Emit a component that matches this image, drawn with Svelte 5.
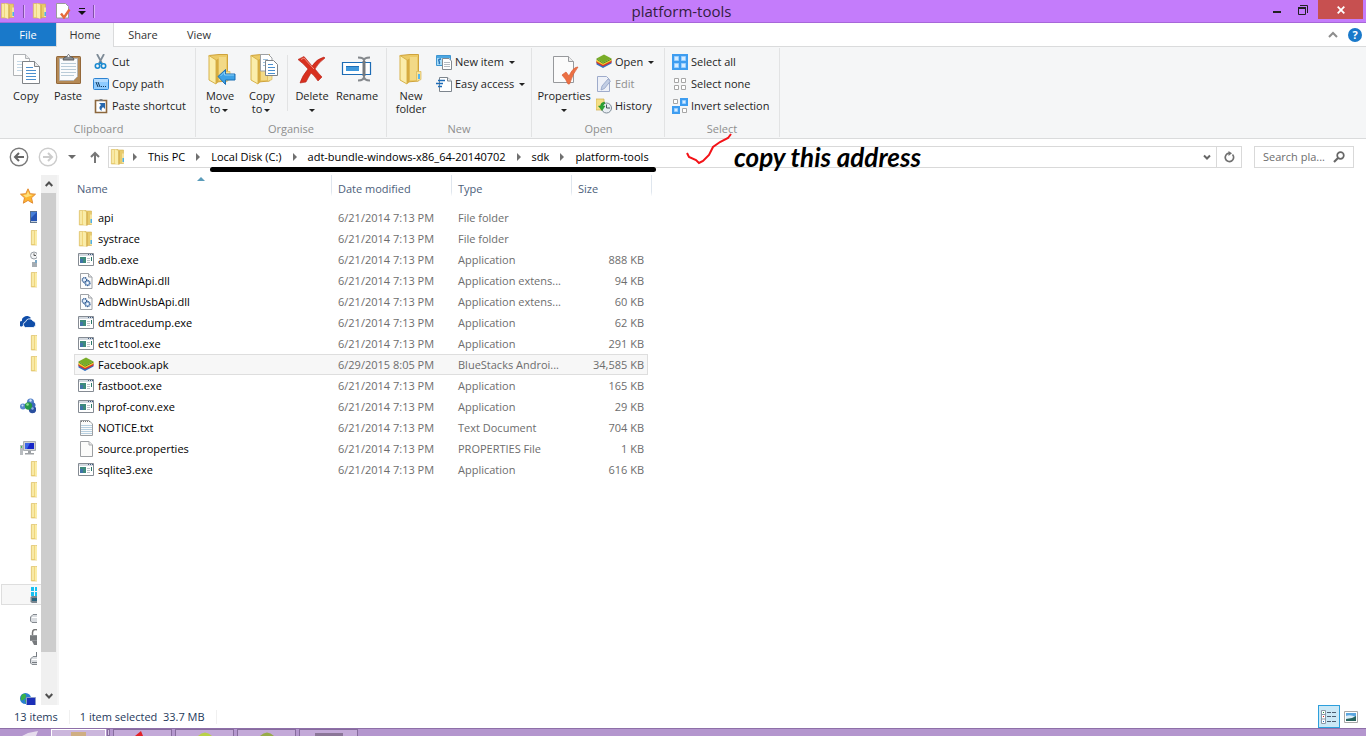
<script>
  const files = [
    { name: 'api', date: '6/21/2014 7:13 PM', type: 'File folder', size: '', icon: 'folder' },
    { name: 'systrace', date: '6/21/2014 7:13 PM', type: 'File folder', size: '', icon: 'folder' },
    { name: 'adb.exe', date: '6/21/2014 7:13 PM', type: 'Application', size: '888 KB', icon: 'exe' },
    { name: 'AdbWinApi.dll', date: '6/21/2014 7:13 PM', type: 'Application extens...', size: '94 KB', icon: 'dll' },
    { name: 'AdbWinUsbApi.dll', date: '6/21/2014 7:13 PM', type: 'Application extens...', size: '60 KB', icon: 'dll' },
    { name: 'dmtracedump.exe', date: '6/21/2014 7:13 PM', type: 'Application', size: '62 KB', icon: 'exe' },
    { name: 'etc1tool.exe', date: '6/21/2014 7:13 PM', type: 'Application', size: '291 KB', icon: 'exe' },
    { name: 'Facebook.apk', date: '6/29/2015 8:05 PM', type: 'BlueStacks Androi...', size: '34,585 KB', icon: 'stack' },
    { name: 'fastboot.exe', date: '6/21/2014 7:13 PM', type: 'Application', size: '165 KB', icon: 'exe' },
    { name: 'hprof-conv.exe', date: '6/21/2014 7:13 PM', type: 'Application', size: '29 KB', icon: 'exe' },
    { name: 'NOTICE.txt', date: '6/21/2014 7:13 PM', type: 'Text Document', size: '704 KB', icon: 'text' },
    { name: 'source.properties', date: '6/21/2014 7:13 PM', type: 'PROPERTIES File', size: '1 KB', icon: 'page' },
    { name: 'sqlite3.exe', date: '6/21/2014 7:13 PM', type: 'Application', size: '616 KB', icon: 'exe' }
  ];

  const crumbs = ['This PC', 'Local Disk (C:)', 'adt-bundle-windows-x86_64-20140702', 'sdk', 'platform-tools'];

  // null leaves a blank row between the sections of the tree
  const tree = [
    'star', 'desktop', 'folder', 'recent', 'folder', null,
    'cloud', 'folder', 'folder', null,
    'homegroup', null,
    'pc', 'folder', 'folder', 'folder', 'folder', 'folder', 'folder',
    'osdrive', 'drive', 'locked', 'removable', null,
    'network'
  ];
  const roots = ['star', 'cloud', 'homegroup', 'pc', 'network'];

  let selected = $state('Facebook.apk');
  let query = $state('');
</script>

{#snippet icon(name)}
  <svg class="ico" viewBox="0 0 16 16" aria-hidden="true">
    {#if name === 'folder'}
      <path d="M7 1h6.500v13.500H7z" fill="#e8cb6c" stroke="#d3b253" stroke-width=".6" />
      <path d="M1.300.5H8V15H1.300z" fill="#f0d67c" stroke="#d9ba5c" stroke-width=".6" />
      <path d="M2 1h2v13H2z" fill="#f8e9a6" />
      <path d="M5 .5 8.500 2v14L5 14.500z" fill="#faeda9" />
      <path d="M8.500 2h1v13.500l-1 .5z" fill="#cda340" />
      <path d="M12 4.500h2V14h-2z" fill="#f5e3a0" />
      <path d="M12.500 9H14v4h-1.500z" fill="#4fb0e4" />
    {:else if name === 'exe'}
      <path d="M.5 1.500h15v12H.5z" fill="#fff" stroke="#858b93" />
      <path d="M1 2h14v2H1z" fill="#d3d9e0" />
      <path d="M10 2h1v1h-1zM12 2h1v1h-1zM14 2h1v1h-1z" fill="#3f5a80" />
      <path d="M2 5h6v6H2z" fill="#3d8a7c" />
      <path d="M2 7h3v4H2z" fill="#4173a8" />
      <path d="M9 6h3v1H9zM9 8h3v1H9zM9 10h3v1H9z" fill="#bcc2c8" />
      <path d="M13 5h1v4h-1z" fill="#2b7869" />
    {:else if name === 'dll'}
      <path d="M2.500.5h8L14 4v11.500H2.500z" fill="#fdfdfd" stroke="#9fa3a8" />
      <path d="M10.500.5V4H14" fill="#e8e8e8" stroke="#9fa3a8" />
      <circle cx="6.500" cy="7" r="2.300" fill="#e4eefb" stroke="#2f5a91" stroke-dasharray="1.200 .5" stroke-width="1.300" />
      <circle cx="9.500" cy="10" r="2.500" fill="#b9d0ea" stroke="#2f5a91" stroke-dasharray="1.200 .5" stroke-width="1.300" />
      <circle cx="9.500" cy="10" r=".9" fill="#fff" />
    {:else if name === 'stack'}
      <path d="M.5 7 7 10.500 15.500 6.500V9.500L7 14 .5 10.500z" fill="#3171c4" />
      <path d="M.5 6.500 7 10 15.500 6v2.500L7 12.500.5 9z" fill="#d8362b" />
      <path d="M.5 5.500 7 9 15.500 5v1.700L7 11 .5 7.500z" fill="#f6cf30" />
      <path d="M.5 4.500 8 .5 15.500 4.500 7 8.700z" fill="#79ad28" />
      <path d="M.5 4.500 7 8.700 15.500 4.500v.9L7 9.800.5 5.500z" fill="#4b8616" />
    {:else if name === 'text' || name === 'page'}
      <path d="M2.500.5h8.500L14.500 4v11.500h-12z" fill="#fbfbfa" stroke="#9c9fa2" />
      {#if name === 'text'}
        <path d="M3 5.500h11M3 7.500h11M3 9.500h11M3 11.500h11M3 13.500h11" stroke="#b7cfe0" />
        <path d="M3 1.500h9" stroke="#777" stroke-dasharray="1 1" />
      {:else}
        <path d="M11 .5V4h3.500" fill="#e6e6e6" stroke="#a9abad" />
      {/if}
    {:else if name === 'star'}
      <path d="m8 .8 2.200 4.900 5.300.5-4 3.600 1.200 5.400L8 12.400l-4.700 2.800 1.200-5.400-4-3.600 5.300-.5z" fill="#fdb52e" stroke="#e28d35" />
      <path d="m8 3 1.400 3.600 3.600.4-7 2.500L3 7l3.600-.4z" fill="#ffe07d" />
    {:else if name === 'desktop'}
      <path d="M0 2h16v12H0z" fill="#5a718f" />
      <path d="M1 3h14v9H1z" fill="#2453b5" />
      <path d="m1 3 6 0-6 6z" fill="#477fd8" />
      <path d="M1 12h14v1H1z" fill="#c2cedb" />
    {:else if name === 'recent'}
      <circle cx="4" cy="4.500" r="3.500" fill="#f3f4f5" stroke="#9aa0a6" />
      <path d="M4 2.500v2h2" fill="none" stroke="#555" />
      <path d="M2 11h12v5H2z" fill="#a6adb3" />
      <path d="M5 9h4v3H5z" fill="#79a8c8" />
    {:else if name === 'cloud'}
      <path d="M2 12.500a2.800 2.800 0 0 1 0-5.600 3.500 3.500 0 0 1 2-3.900A5 5 0 0 1 11 4L7 7z" fill="#0f4da8" />
      <path d="M5.500 13.500a3 3 0 0 1 .2-5.800 3.800 3.800 0 0 1 7-1 3.500 3.500 0 0 1 .5 6.800z" fill="#0f4da8" stroke="#fff" stroke-width=".8" />
    {:else if name === 'homegroup'}
      <circle cx="10.500" cy="4" r="3.500" fill="#507fc8" />
      <circle cx="3" cy="8.500" r="3" fill="#5987cf" />
      <circle cx="12.500" cy="11.500" r="3.700" fill="#2a4f9f" />
      <circle cx="13" cy="7" r="2.500" fill="#3b68b8" />
      <circle cx="8.500" cy="8" r="3.700" fill="#249746" />
      <circle cx="7.500" cy="6.500" r="1.300" fill="#93df92" />
      <circle cx="10.500" cy="2.500" r="1.200" fill="#cfe2fa" />
      <circle cx="12.500" cy="10.500" r="1.200" fill="#8fb2ea" />
      <circle cx="2.500" cy="7.500" r="1" fill="#d4e4fa" />
    {:else if name === 'pc'}
      <path d="M0 5h3v10H0z" fill="#b8bcc0" />
      <path d="M1 6h1v2H1z" fill="#44bd50" />
      <path d="M3.500 1.500h12v9h-12z" fill="#cfd2d5" stroke="#aaaeb2" />
      <path d="M5 3h9v6H5z" fill="#1726c8" />
      <path d="M5 3h5L7 9H5z" fill="#3c65e6" />
      <path d="M8 11h3v2H8zM5 13h9v1.500H5z" fill="#9da1a5" />
    {:else if name === 'osdrive'}
      <path d="M1 0h3v4H1zM5 0h4v4H5zM1 5h3v4H1zM5 5h4v4H5z" fill="#17c1f2" />
      <path d="M.500 10 2 9h14v7H2L.5 15z" fill="#7b8790" />
      <path d="M2 11h14v3H2z" fill="#26647f" />
    {:else if name === 'drive' || name === 'removable'}
      <path d="M.5 9 3 6.500h13v8H2L.5 13z" fill="#d9dce0" stroke="#84898f" />
      <path d="M2 9.500h13" stroke="#fff" />
      {#if name === 'removable'}
        <path d="M6.500 2v5M2 12.500h13" stroke="#777c82" />
      {/if}
    {:else if name === 'locked'}
      <path d="M2.500 6V3.500q0-3 3-3T9 3.500V6" fill="none" stroke="#777" stroke-width="1.500" />
      <path d="M0 6h12v6H0z" fill="#929598" />
      <path d="M0 8h12M0 10h12" stroke="#5e6265" />
      <path d="M2 12h8v4H4z" fill="#777a7d" />
    {:else if name === 'network'}
      <circle cx="5.500" cy="6.500" r="5.500" fill="#2b7fd0" />
      <path d="M2 2.500q4-2 4 1T3 8 1 5zM5 8l4-2v5l-3 1z" fill="#37b248" />
      <path d="M6.500 5.500h9v8h-9z" fill="#1b2fb8" stroke="#8c9cc8" />
      <path d="M9 14h4v2H9z" fill="#7b86a5" />
    {:else if name === 'cut'}
      <path d="m4 0 5 9.500M11 0 6 9.500" fill="none" stroke="#7e8b97" stroke-width="1.800" />
      <circle cx="4.500" cy="12" r="2.200" fill="none" stroke="#1b8ad0" stroke-width="1.600" />
      <circle cx="10.500" cy="12" r="2.200" fill="none" stroke="#1b8ad0" stroke-width="1.600" />
      <path d="m6 10.500 1.500-2L9 10.500" fill="none" stroke="#1b8ad0" stroke-width="1.400" />
    {:else if name === 'path'}
      <rect x=".5" y="2.500" width="15" height="11" rx="1" fill="#8ecbff" stroke="#2d83d2" />
      <path d="M1 3h14v3H1z" fill="#b4dcff" />
      <path d="m3 6 2 5m0-5 2 5" stroke="#143a5e" />
      <path d="M8 10h1v1H8zM10 10h1v1h-1zM12 10h1v1h-1z" fill="#143a5e" />
    {:else if name === 'shortcut'}
      <path d="M2.500 2.500h11v12h-11z" fill="#fff" stroke="#8c673d" stroke-width="1.600" />
      <path d="M5 3q3-4 6 0z" fill="#777" />
      <path d="M6 5h6v6l-2-2q-2 1.500-1.500 4Q4.500 10 8 7z" fill="#2768ae" />
    {:else if name === 'newitem'}
      <path d="M.5 1.500h14v10H.5z" fill="#a9ddf8" stroke="#3f95d1" />
      <path d="M1 2h13v2H1z" fill="#4ca7e2" />
      <path d="M5 5q-3 0-2 2t0 3" fill="none" stroke="#2471b8" stroke-width="1.500" />
      <path d="M6.500 4.500H13L15.500 7v8.500h-9z" fill="#fff" stroke="#858a8f" />
      <path d="M8 8.500h6M8 10.500h6M8 12.500h6" stroke="#b6bcc2" />
    {:else if name === 'easy'}
      <path d="M3.500 1.500h8l4 3.500v10.500h-12z" fill="#fff" stroke="#7d858d" />
      <path d="M11.500 1.500V5h4" fill="#edf0f2" stroke="#7d858d" />
      <path d="M2 4.500h7M0 7.500h7M2 10.500h4" stroke="#1d6cb8" stroke-width="1.300" />
    {:else if name === 'edit'}
      <path d="M1.500.5h9l3 3v12h-12z" fill="#eef1f8" stroke="#9eabcb" />
      <path d="m5 14 1-4 6-7 2.500 2-6 7.500z" fill="#c2cee4" stroke="#8fa0c4" stroke-width=".8" />
    {:else if name === 'history'}
      <path d="M0 1h8v11H0z" fill="#f4df85" stroke="#d0ae4c" stroke-width=".7" />
      <circle cx="10.500" cy="10" r="5" fill="#e9eef3" stroke="#7d8b97" />
      <path d="M10.500 6.500V10H14" fill="none" stroke="#49545e" />
      <path d="M8.500 4q-4 .5-4 4H2.500L6 12.500 9 8H7q0-2 1.500-2z" fill="#2ba534" stroke="#178022" stroke-width=".5" />
    {:else if name === 'selall'}
      <path d="M0 0h16v16H0z" fill="#3e9df0" />
      <path d="M2.500 2.500h4v4h-4zM9.500 2.500h4v4h-4zM2.500 9.500h4v4h-4zM9.500 9.500h4v4h-4z" fill="#d7edff" stroke="#9bcfff" />
    {:else if name === 'selnone'}
      <path d="M2.500 2.500h4v4h-4zM9.500 2.500h4v4h-4zM2.500 9.500h4v4h-4zM9.500 9.500h4v4h-4z" fill="#fff" stroke="#a6a6a6" />
    {:else if name === 'invert'}
      <path d="M8 0h8v8H8zM0 8h8v8H0z" fill="#3e9df0" />
      <path d="M1.500 1.500h4v4h-4zM10.500 10.500h4v4h-4z" fill="#fff" stroke="#a6a6a6" />
      <path d="M10.500 2.500h3v3h-3zM2.500 10.500h3v3h-3z" fill="#d7edff" stroke="#9bcfff" />
    {:else if name === 'check'}
      <path d="M1.500.5h9l3 3v11.500h-12z" fill="#fff" stroke="#9b9b9b" />
      <path d="m6 10.500 3 4 5.500-8" fill="none" stroke="#e76b3c" stroke-width="2.400" />
    {/if}
  </svg>
{/snippet}

{#snippet bigicon(name)}
  <svg class="bigico" viewBox="0 0 32 32" aria-hidden="true">
    {#if name === 'copy'}
      <path d="M3.500 1.500h12l4 4v17h-16z" fill="#fdfdfd" stroke="#b0b3b6" />
      <path d="M15.500 1.500v4h4" fill="#e8e8e8" stroke="#b0b3b6" />
      <path d="M7 8.500h7M7 11.500h6M7 14.500h6M7 17.500h6" stroke="#c4d8e7" />
      <path d="M12.500 8.500h12l5 5v17h-17z" fill="#fff" stroke="#7f8387" />
      <path d="M24.500 8.500v5h5" fill="#e8e8e8" stroke="#7f8387" />
      <path d="M16 14.500h7M16 17.500h10M16 20.500h10M16 23.500h10M16 26.500h10" stroke="#4b8fce" />
    {:else if name === 'paste'}
      <rect x="4" y="3" width="25" height="28" rx="1.500" fill="#94683a" />
      <path d="M5 4h23v26H5z" fill="#b58a56" />
      <path d="M7.500 5.500h18v18l-4 4h-14z" fill="#fafbfc" stroke="#b5b5b5" />
      <path d="M9 10.500h15M9 13.500h15M9 16.500h15M9 19.500h15M9 22.500h13" stroke="#b9cbd8" />
      <path d="M11 7q0-3 4-3.500 1.500-4 3 0 4 .5 4 3.500z" fill="#8a8e92" stroke="#5d6165" />
      <circle cx="16.500" cy="3" r="1" fill="#fff" />
    {:else if name === 'move' || name === 'copyto' || name === 'newfolder'}
      <path d="M5 2.500 15 1.500h8.500V28L12 29z" fill="#ecca66" stroke="#cfa33c" />
      <path d="M15 4h7v23h-7z" fill="#f2d987" />
      <path d="M5 2.500 12 7v24l-7-4z" fill="#fbedaa" stroke="#d8b34b" />
      <path d="M12 7 14.500 5.500V29L12 31z" fill="#d6ab40" />
      <path d="M21.500 18.500H26v8l-4.500 2z" fill="#f6e29a" stroke="#d8b454" stroke-width=".7" />
      {#if name === 'newfolder'}
        <path d="M23 21h2v5h-2z" fill="#57b5ec" />
      {:else if name === 'move'}
        <path d="M14 23.500 21.500 16.500V21H31v6h-9.500v4.500z" fill="#3ea2e6" stroke="#1d6fb3" />
        <path d="m16.500 23 4-4v3h9.500" fill="none" stroke="#8ad0f7" />
      {:else}
        <path d="M14.500 1.500h8L26 5v13H14.500z" fill="#fff" stroke="#9da0a4" />
        <path d="M17 6.500h5M17 9.500h5M17 12.500h5" stroke="#9fc0dc" />
        <path d="M19.500 7.500h8l4 4v11h-12z" fill="#fff" stroke="#7f8387" />
        <path d="M22 11.500h5M22 14.500h7M22 17.500h7M22 20.500h7" stroke="#4b8fce" />
      {/if}
    {:else if name === 'delete'}
      <path d="M2 6.500 8 3.500Q12 8 16 13 21 5.500 28 4l1 1q-7 5-10 11 4 5 7 8l-4 4q-4-6-7-8-3 5-5 9l-6 1q2-7 8-14Q8 11 2 6.500z" fill="#d8301f" stroke="#b5241a" stroke-width=".6" />
      <path d="M5 6.500 8 5q6 7 10 11" fill="none" stroke="#f08b7b" />
    {:else if name === 'rename'}
      <path d="M1.500 9.500h28v12h-28z" fill="#fff" stroke="#1d6cb5" stroke-width="1.200" />
      <path d="M5 13h13v5H5z" fill="#3f98dc" />
      <path d="M5 13h13v1H5z" fill="#1f70b8" />
      <path d="M17 4.500q6 0 6 3v16q0 4-6 4m12-23q-6 0-6 3v16q0 4 6 4" fill="none" stroke="#85898d" stroke-width="2" />
      <path d="M23 8v15" stroke="#75797d" stroke-width="3" />
    {:else if name === 'props'}
      <path d="M5.500 3.500h15l5 5v21h-20z" fill="#fbfbfb" stroke="#97999c" />
      <path d="M20.500 3.500v5h5" fill="#ececec" stroke="#97999c" />
      <path d="m14 22 4-3 3 4q4-9 9-9-5 6-8.500 17H20q-2-5-6-9z" fill="#ec7043" stroke="#d95c33" stroke-width=".7" />
    {/if}
  </svg>
{/snippet}

{#snippet big(name, lines, wide = '', drop = false)}
  <button class="big {wide}">
    {@render bigicon(name)}
    <span>
      {#each lines as line, i}
        {line}{#if i < lines.length - 1}<br />{/if}
      {/each}{#if drop}{#if lines.length === 1}<br />{/if}<i class="caret"></i>{/if}
    </span>
  </button>
{/snippet}

{#snippet small(name, label, drop = false, disabled = false)}
  <button class="small" {disabled}>
    {@render icon(name)}
    <span>{label}</span>
    {#if drop}<i class="caret"></i>{/if}
  </button>
{/snippet}

<div class="window">
  <header class="titlebar">
    <div class="quick">
      {@render icon('folder')}
      <i class="bar"></i>
      <button aria-label="New folder">{@render icon('folder')}</button>
      <button aria-label="Properties">{@render icon('check')}</button>
      <button class="more" aria-label="Customise">
        <svg width="8" height="7" viewBox="0 0 8 7"><path d="M1 0h6v1H1zM0 3h8L4 7z" fill="#111" /></svg>
      </button>
      <i class="bar"></i>
    </div>
    <h1>platform-tools</h1>
    <div class="controls">
      <button aria-label="Minimise"><svg width="10" height="10" viewBox="0 0 10 10"><path d="M1 6h8v2H1z" fill="#222" /></svg></button>
      <button aria-label="Restore">
        <svg width="10" height="10" viewBox="0 0 10 10"><path d="M2 .5h7.500V8M.5 3h7v6.500h-7z" fill="none" stroke="#222" /><path d="M0 2h8v2H0z" fill="#222" /></svg>
      </button>
      <button class="close" aria-label="Close">
        <svg width="8" height="8" viewBox="0 0 8 8"><path d="m.7.7 6.600 6.600m0-6.600L.7 7.300" stroke="#fff" stroke-width="1.800" /></svg>
      </button>
    </div>
  </header>

  <nav class="tabs">
    <button class="file">File</button>
    <button class="active">Home</button>
    <button>Share</button>
    <button class="view">View</button>
    <div class="help">
      <button aria-label="Collapse ribbon">
        <svg width="10" height="8" viewBox="0 0 10 8"><path d="m1 6 4-4 4 4" fill="none" stroke="#8d8d8d" stroke-width="2" /></svg>
      </button>
      <button class="question" aria-label="Help">?</button>
    </div>
  </nav>

  <div class="ribbon">
    <section class="group clipboard">
      <div class="tools">
        {@render big('copy', ['Copy'])}
        {@render big('paste', ['Paste'])}
        <div class="stack">
          {@render small('cut', 'Cut')}
          {@render small('path', 'Copy path')}
          {@render small('shortcut', 'Paste shortcut')}
        </div>
      </div>
      <h2>Clipboard</h2>
    </section>
    <section class="group organise">
      <div class="tools">
        {@render big('move', ['Move', 'to'], '', true)}
        {@render big('copyto', ['Copy', 'to'], '', true)}
        <i class="divider"></i>
        {@render big('delete', ['Delete'], '', true)}
        {@render big('rename', ['Rename'], 'wide')}
      </div>
      <h2>Organise</h2>
    </section>
    <section class="group new">
      <div class="tools">
        {@render big('newfolder', ['New', 'folder'])}
        <div class="stack">
          {@render small('newitem', 'New item', true)}
          {@render small('easy', 'Easy access', true)}
        </div>
      </div>
      <h2>New</h2>
    </section>
    <section class="group open">
      <div class="tools">
        {@render big('props', ['Properties'], 'wider', true)}
        <div class="stack">
          {@render small('stack', 'Open', true)}
          {@render small('edit', 'Edit', false, true)}
          {@render small('history', 'History')}
        </div>
      </div>
      <h2>Open</h2>
    </section>
    <section class="group select">
      <div class="tools">
        <div class="stack">
          {@render small('selall', 'Select all')}
          {@render small('selnone', 'Select none')}
          {@render small('invert', 'Invert selection')}
        </div>
      </div>
      <h2>Select</h2>
    </section>
  </div>

  <div class="addressbar">
    <button aria-label="Back">
      <svg width="20" height="20" viewBox="0 0 20 20"><circle cx="10" cy="10" r="8.700" fill="none" stroke="#7a7a7a" stroke-width="1.400" /><path d="M15 10H6m4-4-4 4 4 4" fill="none" stroke="#666" stroke-width="2" /></svg>
    </button>
    <button aria-label="Forward" disabled>
      <svg width="20" height="20" viewBox="0 0 20 20"><circle cx="10" cy="10" r="8.700" fill="none" stroke="#ccc" stroke-width="1.400" /><path d="M5 10h9m-4-4 4 4-4 4" fill="none" stroke="#ccc" stroke-width="2" /></svg>
    </button>
    <button class="recent" aria-label="Recent locations">
      <svg width="8" height="5" viewBox="0 0 8 5"><path d="M0 0h8L4 4z" fill="#6b6b6b" /></svg>
    </button>
    <button class="up" aria-label="Up">
      <svg width="10" height="12" viewBox="0 0 10 12"><path d="M5 12V2M1 6l4-4 4 4" fill="none" stroke="#777" stroke-width="2" /></svg>
    </button>
    <div class="address">
      <div class="crumbs">
        {@render icon('folder')}
        {#each crumbs as crumb}
          <svg width="4" height="8" viewBox="0 0 4 8"><path d="M0 0v8l4-4z" fill="#707070" /></svg>
          <a href="#{crumb}">{crumb}</a>
        {/each}
      </div>
      <button class="history" aria-label="Previous locations">
        <svg width="8" height="7" viewBox="0 0 8 7"><path d="m1 1.500 3 3 3-3" fill="none" stroke="#666" stroke-width="2" /></svg>
      </button>
      <button class="refresh" aria-label="Refresh">
        <svg width="12" height="12" viewBox="0 0 12 12"><path d="M9.500 3.500A4.200 4.200 0 1 1 6 2.200" fill="none" stroke="#707070" stroke-width="1.700" /><path d="M5.500 0 9 2.300 5.500 5z" fill="#707070" /></svg>
      </button>
      <div class="underline"></div>
      <div class="note">
        <svg width="48" height="36" viewBox="0 0 48 36"><path d="m1 20 2 4 7 3 3 3 4-2 6-6 4-8 7-5 8-4 3-4" fill="none" stroke="#f31217" stroke-width="2" /></svg>
        <span>copy this address</span>
      </div>
    </div>
    <label class="search">
      <input type="text" placeholder="Search pla..." aria-label="Search" bind:value={query} />
      <svg width="12" height="12" viewBox="0 0 12 12"><circle cx="7.500" cy="4.500" r="3.300" fill="none" stroke="#666" stroke-width="1.700" /><path d="M5 7 1 11" stroke="#666" stroke-width="2.200" /></svg>
    </label>
  </div>

  <div class="body">
    <aside>
      <ul>
        {#each tree as item}
          <li class:root={roots.includes(item)} class:current={item === 'osdrive'}>
            {#if item}<span>{@render icon(item)}</span>{/if}
          </li>
        {/each}
      </ul>
      <div class="scrollbar">
        <button aria-label="Scroll up"><svg width="8" height="8" viewBox="0 0 8 8"><path d="m.7 6 3.300-3.500L7.300 6" fill="none" stroke="#505050" stroke-width="2" /></svg></button>
        <div class="track"><div class="thumb"></div></div>
        <button aria-label="Scroll down"><svg width="8" height="8" viewBox="0 0 8 8"><path d="m.7 2 3.300 3.500L7.300 2" fill="none" stroke="#505050" stroke-width="2" /></svg></button>
      </div>
    </aside>

    <main>
      <table>
        <colgroup>
          <col class="c-name" /><col class="c-date" /><col class="c-date" /><col class="c-size" /><col class="c-end" /><col class="c-end" />
        </colgroup>
        <thead>
          <tr>
            <th>Name<svg class="sort" width="8" height="4" viewBox="0 0 8 4"><path d="m0 4 4-4 4 4z" fill="#5b9cba" /></svg></th>
            <th>Date modified</th>
            <th>Type</th>
            <th colspan="3">Size</th>
          </tr>
        </thead>
        <tbody>
          {#each files as file}
            <tr class:selected={selected === file.name} onclick={() => (selected = file.name)}>
              <td class="name"><div>{@render icon(file.icon)}{file.name}</div></td>
              <td>{file.date}</td>
              <td>{file.type}</td>
              <td class="size">{file.size}</td>
              <td class="gap"></td>
            </tr>
          {/each}
        </tbody>
      </table>
    </main>
  </div>

  <footer class="status">
    <span>13 items</span>
    <span>1 item selected&nbsp; 33.7 MB</span>
    <div class="views">
      <button class="on" aria-label="Details">
        <svg width="16" height="14" viewBox="0 0 16 14"><path d="M.5.5h4v13h-4zM.5 4.500h4M.5 9h4" fill="#fff" stroke="#8c98a5" /><path d="M2 2h1v1H2z" fill="#2b8f3a" /><path d="M2 6h1v1H2z" fill="#e01919" /><path d="M2 11h1v1H2z" fill="#246dc0" /><path d="M6 2.500h4M11 2.500h4M6 6.500h4M11 6.500h4M6 11.500h4M11 11.500h4" stroke="#4c5d70" /></svg>
      </button>
      <button aria-label="Large icons">
        <svg width="14" height="12" viewBox="0 0 14 12"><path d="M.5.5h13v11H.5z" fill="#fff" stroke="#a7a7a7" /><path d="M2 2h10v8H2z" fill="#5ba6df" /><path d="M2 5q4-2 10 1v2H2z" fill="#dceefa" /><path d="m2 8 6-1 4-2v5H2z" fill="#28645e" /></svg>
      </button>
    </div>
  </footer>

  <div class="taskbar">
    <svg class="start" width="20" height="7" viewBox="0 0 20 7"><path d="m3 7 6-3 10-2-2 5z" fill="#e6dced" /></svg>
    <button class="on" aria-label="File Explorer"><svg width="16" height="6" viewBox="0 0 16 6"><path d="M0 1h15v5H0z" fill="#cfae83" /></svg></button>
    <i></i>
    <button aria-label="Reader"><svg width="16" height="7" viewBox="0 0 16 7"><path d="m0 6 6-5 2 5z" fill="#e32127" /></svg></button>
    <button aria-label="Android Studio"><svg width="16" height="6" viewBox="0 0 16 6"><path d="M0 6q8-9 16 0z" fill="#b8d148" /></svg></button>
    <button aria-label="Android Tools"><svg width="16" height="6" viewBox="0 0 16 6"><path d="M0 6q8-9 16 0z" fill="#97ab48" /></svg></button>
    <button aria-label="Console"><svg width="28" height="5" viewBox="0 0 28 5"><path d="M0 2h28v3H0z" fill="#8b7698" /></svg></button>
  </div>
</div>

<style>
  :global(body) {
    margin: 0;
    background: #fff;
  }

  .window {
    display: flex;
    flex-direction: column;
    height: 100vh;
    overflow: hidden;
    font: 11px/14px "Open Sans", "Noto Sans", sans-serif;
    color: #1e1e1e;
  }

  button {
    display: flex;
    align-items: center;
    justify-content: center;
    box-sizing: border-box;
    margin: 0;
    padding: 0;
    border: 0;
    background: none;
    color: inherit;
    font: inherit;
  }

  svg {
    display: block;
    flex: none;
  }

  .ico {
    width: 16px;
    height: 16px;
  }

  .caret {
    display: inline-block;
    margin: 0 2px;
    border: 3px solid transparent;
    border-top-color: #222;
    border-bottom: 0;
    vertical-align: middle;
  }

  /* Title bar */
  .titlebar {
    display: grid;
    grid-template-columns: 1fr auto 1fr;
    height: 23px;
    flex: none;
    box-sizing: border-box;
    padding-right: 3px;
    border-bottom: 1px solid #a767d9;
    background: #c47cfb;
  }

  .quick {
    display: flex;
    align-items: center;
    gap: 7px;
  }

  .bar {
    width: 1px;
    height: 13px;
    background: #8250a8;
    border-right: 1px solid #dcb2fb;
  }

  .more {
    width: 8px;
  }

  h1 {
    margin: 0;
    font-size: 15px;
    line-height: 22px;
    font-weight: 400;
    color: #33203f;
  }

  .controls {
    display: flex;
    justify-content: flex-end;
  }

  .controls button {
    width: 26px;
    height: 19px;
  }

  .controls .close {
    width: 45px;
    margin-left: 2px;
    background: #c75050;
  }

  /* Ribbon tabs */
  .tabs {
    display: flex;
    height: 24px;
    flex: none;
    box-sizing: border-box;
    border-bottom: 1px solid #dadbdc;
    color: #333;
  }

  .tabs > button {
    width: 58px;
    height: 24px;
  }

  .tabs .file {
    width: 56px;
    height: 23px;
    background: #1979ca;
    color: #fff;
  }

  .tabs .active {
    border: 1px solid #dadbdc;
    border-top: 0;
    border-bottom: 0;
    background: #f5f6f7;
  }

  .tabs .view {
    width: 54px;
  }

  .help {
    display: flex;
    align-items: center;
    gap: 10px;
    margin-left: auto;
    padding-right: 4px;
  }

  .question {
    width: 14px;
    height: 14px;
    border-radius: 50%;
    background: #1979ca;
    color: #fff;
    font-weight: 700;
  }

  /* Ribbon */
  .ribbon {
    display: flex;
    height: 92px;
    flex: none;
    box-sizing: border-box;
    border-bottom: 1px solid #dadbdc;
    background: #f5f6f7;
  }

  .group {
    display: flex;
    flex-direction: column;
    box-sizing: border-box;
    height: 89px;
    margin-top: 1px;
    padding: 3px 3px 0;
    border-right: 1px solid #e2e3e4;
  }

  .clipboard {
    width: 196px;
    padding-left: 5px;
  }

  .organise {
    width: 191px;
  }

  .new {
    width: 145px;
  }

  .open {
    width: 133px;
    padding-left: 4px;
  }

  .select {
    width: 115px;
  }

  .tools {
    display: flex;
    height: 70px;
  }

  .group h2 {
    margin: 0;
    font-size: 11px;
    line-height: 16px;
    font-weight: 400;
    text-align: center;
    color: #8e8e8e;
  }

  .big {
    flex-direction: column;
    justify-content: flex-start;
    gap: 4px;
    width: 42px;
    padding-top: 2px;
    line-height: 13px;
    white-space: nowrap;
  }

  .big.wide {
    width: 48px;
  }

  .big.wider {
    width: 56px;
  }

  .bigico {
    width: 32px;
    height: 32px;
  }

  .divider {
    width: 1px;
    height: 56px;
    margin: 4px 3px 4px 4px;
    background: #e2e3e4;
  }

  .stack {
    padding-left: 4px;
  }

  .small {
    justify-content: flex-start;
    gap: 3px;
    height: 22px;
    white-space: nowrap;
  }

  .small:disabled {
    color: #8e8e8e;
  }

  /* Address bar */
  .addressbar {
    display: flex;
    align-items: center;
    height: 36px;
    flex: none;
    padding: 0 12px 0 9px;
  }

  .addressbar > button {
    margin-right: 9px;
  }

  .addressbar .recent {
    margin: 0 14px 0 0;
    padding-left: 1px;
  }

  .addressbar .up {
    margin-right: 8px;
  }

  .address {
    position: relative;
    display: flex;
    flex: 1;
    align-items: center;
    box-sizing: border-box;
    height: 22px;
    border: 1px solid #d9d9d9;
  }

  .crumbs {
    display: flex;
    align-items: center;
    gap: 11px;
    padding-left: 1px;
  }

  .crumbs .ico {
    margin-right: -4px;
  }

  .crumbs a {
    color: #000;
    text-decoration: none;
  }

  .history {
    margin: 0 5px 0 auto;
  }

  .refresh {
    width: 25px;
    height: 20px;
    border-left: 1px solid #d9d9d9;
  }

  .underline {
    position: absolute;
    top: 20px;
    left: 101px;
    width: 446px;
    height: 5px;
    border-radius: 3px;
    background: #000;
  }

  .note {
    position: absolute;
    top: -14px;
    left: 577px;
    display: flex;
    color: #000;
    font: italic 700 26px/48px Lato, sans-serif;
    white-space: nowrap;
  }

  .search {
    display: flex;
    align-items: center;
    box-sizing: border-box;
    width: 100px;
    height: 22px;
    margin-left: 12px;
    padding: 0 8px;
    border: 1px solid #d9d9d9;
  }

  .search input {
    flex: 1;
    min-width: 0;
    padding: 0;
    border: 0;
    outline: 0;
    font: inherit;
  }

  .search input::placeholder {
    color: #6d6d6d;
  }

  /* Folder tree and file list */
  .body {
    display: flex;
    flex: 1;
    min-height: 0;
  }

  aside {
    display: flex;
    width: 57px;
    border-right: 2px solid #f5f5f5;
  }

  ul {
    flex: 1;
    min-width: 0;
    margin: 0;
    padding: 10px 0 0;
    overflow: hidden;
    list-style: none;
  }

  li {
    display: flex;
    align-items: center;
    box-sizing: border-box;
    height: 21px;
    margin-left: 1px;
    padding: 0 4px 0 29px;
  }

  li span {
    overflow: hidden;
  }

  li.root {
    padding-left: 19px;
  }

  li.current {
    border: 1px solid #dedede;
    border-right: 0;
    padding-left: 28px;
    background: #f7f7f7;
  }

  .scrollbar {
    display: flex;
    flex-direction: column;
    width: 16px;
    background: #f0f0f0;
  }

  .scrollbar button {
    height: 18px;
  }

  .track {
    flex: 1;
  }

  .thumb {
    height: 93%;
    margin-right: 1px;
    background: #cdcdcd;
  }

  main {
    flex: 1;
    padding-left: 15px;
  }

  table {
    width: 578px;
    table-layout: fixed;
    border-collapse: separate;
    border-spacing: 0;
    color: #6d6d6d;
  }

  .c-name {
    width: 258px;
  }

  .c-date {
    width: 120px;
  }

  .c-size {
    width: 72px;
  }

  .c-end {
    width: 4px;
  }

  th {
    position: relative;
    box-sizing: border-box;
    height: 28px;
    padding: 0 0 0 6px;
    border-style: solid;
    border-width: 0 1px 0 0;
    border-image: linear-gradient(#dfe6ee 60%, #fff 75%) 1;
    font-weight: 400;
    text-align: left;
    color: #4c607a;
  }

  th:first-child {
    padding-left: 3px;
  }

  .sort {
    position: absolute;
    top: 2px;
    left: 123px;
  }

  tbody::before {
    content: "";
    display: block;
    height: 4px;
  }

  td {
    box-sizing: border-box;
    height: 21px;
    padding: 0 0 0 6px;
    border: 0 solid #dedede;
    white-space: nowrap;
  }

  .name {
    padding-left: 4px;
    color: #000;
  }

  .name div {
    display: flex;
    align-items: center;
    gap: 4px;
  }

  .size {
    padding: 0;
    text-align: right;
  }

  td.gap {
    padding: 0;
  }

  .selected td {
    border-width: 1px 0;
    background: #f7f7f7;
  }

  .selected .name {
    border-left-width: 1px;
    padding-left: 3px;
  }

  .selected .gap {
    border-right-width: 1px;
  }

  /* Status bar */
  .status {
    display: flex;
    align-items: center;
    height: 23px;
    flex: none;
    padding: 0 8px 0 14px;
    color: #1e395b;
  }

  .status span {
    margin-right: 10px;
    padding-right: 11px;
    border-right: 1px solid #f0f0f0;
  }

  .views {
    display: flex;
    gap: 4px;
    margin-left: auto;
  }

  .views button {
    height: 23px;
  }

  .views .on {
    width: 22px;
    border: 1px solid #2d9fdc;
    background: #cbe8f6;
  }

  .taskbar {
    display: flex;
    gap: 3px;
    height: 8px;
    flex: none;
    box-sizing: border-box;
    padding-left: 19px;
    border-top: 1px solid #8e6fa8;
    background: #b496ce;
    overflow: hidden;
  }

  .start {
    margin-right: 9px;
  }

  .taskbar button {
    width: 59px;
    height: 8px;
    border: 1px solid #866c9d;
    border-bottom: 0;
    background: #c3a9d8;
  }

  .taskbar .on {
    width: 55px;
    border-color: #fff;
    background: #cbb6dc;
  }

  .taskbar i {
    width: 3px;
    box-sizing: border-box;
    margin-left: -2px;
    border: 1px solid #866c9d;
    background: #d3c1e1;
  }
</style>
